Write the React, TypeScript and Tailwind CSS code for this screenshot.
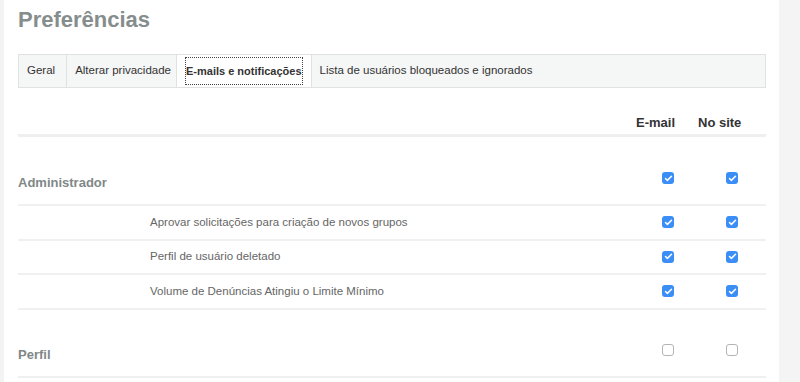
import { Check } from 'lucide-react';

type Row = { label: string; email: boolean; site: boolean };

type Section = { title: string; email: boolean; site: boolean; rows: Row[] };

const sections: Section[] = [
    {
        title: 'Administrador',
        email: true,
        site: true,
        rows: [
            { label: 'Aprovar solicitações para criação de novos grupos', email: true, site: true },
            { label: 'Perfil de usuário deletado', email: true, site: true },
            { label: 'Volume de Denúncias Atingiu o Limite Mínimo', email: true, site: true },
        ],
    },
    { title: 'Perfil', email: false, site: false, rows: [] },
];

const Box = ({ checked }: { checked: boolean }) =>
    checked ? (
        <span className="flex h-[12px] w-[12px] items-center justify-center rounded-[3px] bg-[#3a8ef5]">
            <Check className="h-[9px] w-[9px] text-white" strokeWidth={4} />
        </span>
    ) : (
        <span className="block h-[12px] w-[12px] rounded-[3px] border border-[#b5b5b5] bg-white" />
    );

export default function App() {
    return (
        <div className="flex h-[382px] w-[800px] overflow-hidden bg-white font-['Liberation_Sans',Arial,sans-serif]">
            <div className="w-[4px] shrink-0 bg-[#f3f3f3]" />

            <div className="flex-1 pl-[14px] pr-[13px]">
                <h1 className="pt-[7px] text-[22px] font-bold leading-[26px] text-[#858d8d]">Preferências</h1>

                {/* tabs */}
                <div className="mt-[21px] flex h-[34px] border border-[#e0e2e2] bg-[#f5f6f6] text-[11.5px] text-[#333]">
                    <div className="flex items-center border-r border-[#e0e2e2] pl-[8px] pr-[11px]">Geral</div>
                    <div className="flex items-center border-r border-[#e0e2e2] pl-[8px] pr-[5px]">Alterar privacidade</div>
                    <div className="flex border-r border-[#e0e2e2] bg-white px-[8px] py-[2px]">
                        <span className="flex items-center border border-dotted border-[#444] text-[11px] font-bold">
                            E-mails e notificações
                        </span>
                    </div>
                    <div className="flex items-center px-[8px]">Lista de usuários bloqueados e ignorados</div>
                </div>

                {/* header */}
                <div className="flex h-[49px] items-end border-b-[3px] border-[#efefef] pb-[2px] text-[13px] font-bold text-[#333]">
                    <div className="flex-1" />
                    <div className="w-[64px] pl-[10px]">E-mail</div>
                    <div className="w-[76px] pl-[8px]">No site</div>
                </div>

                {sections.map((s, si) => (
                    <div key={s.title}>
                        <div
                            className={`flex items-end border-b-2 border-[#f0f0f0] pb-[13px] ${si === 0 ? 'h-[69px]' : 'h-[68px]'}`}
                        >
                            <div className="flex-1 text-[13px] font-bold leading-[16px] text-[#7f8888]">{s.title}</div>
                            <div className="mb-[7px] w-[64px] pl-[36px]">
                                <Box checked={s.email} />
                            </div>
                            <div className="mb-[7px] w-[76px] pl-[36px]">
                                <Box checked={s.site} />
                            </div>
                        </div>
                        {s.rows.map((r) => (
                            <div key={r.label} className="flex h-[34.5px] items-center border-b-2 border-[#f0f0f0]">
                                <div className="flex-1 pl-[132px] text-[11.5px] text-[#666]">{r.label}</div>
                                <div className="w-[64px] pl-[36px]">
                                    <Box checked={r.email} />
                                </div>
                                <div className="w-[76px] pl-[36px]">
                                    <Box checked={r.site} />
                                </div>
                            </div>
                        ))}
                    </div>
                ))}
            </div>

            <div className="w-[21px] shrink-0 bg-[#f4f4f4]" />
        </div>
    );
}
